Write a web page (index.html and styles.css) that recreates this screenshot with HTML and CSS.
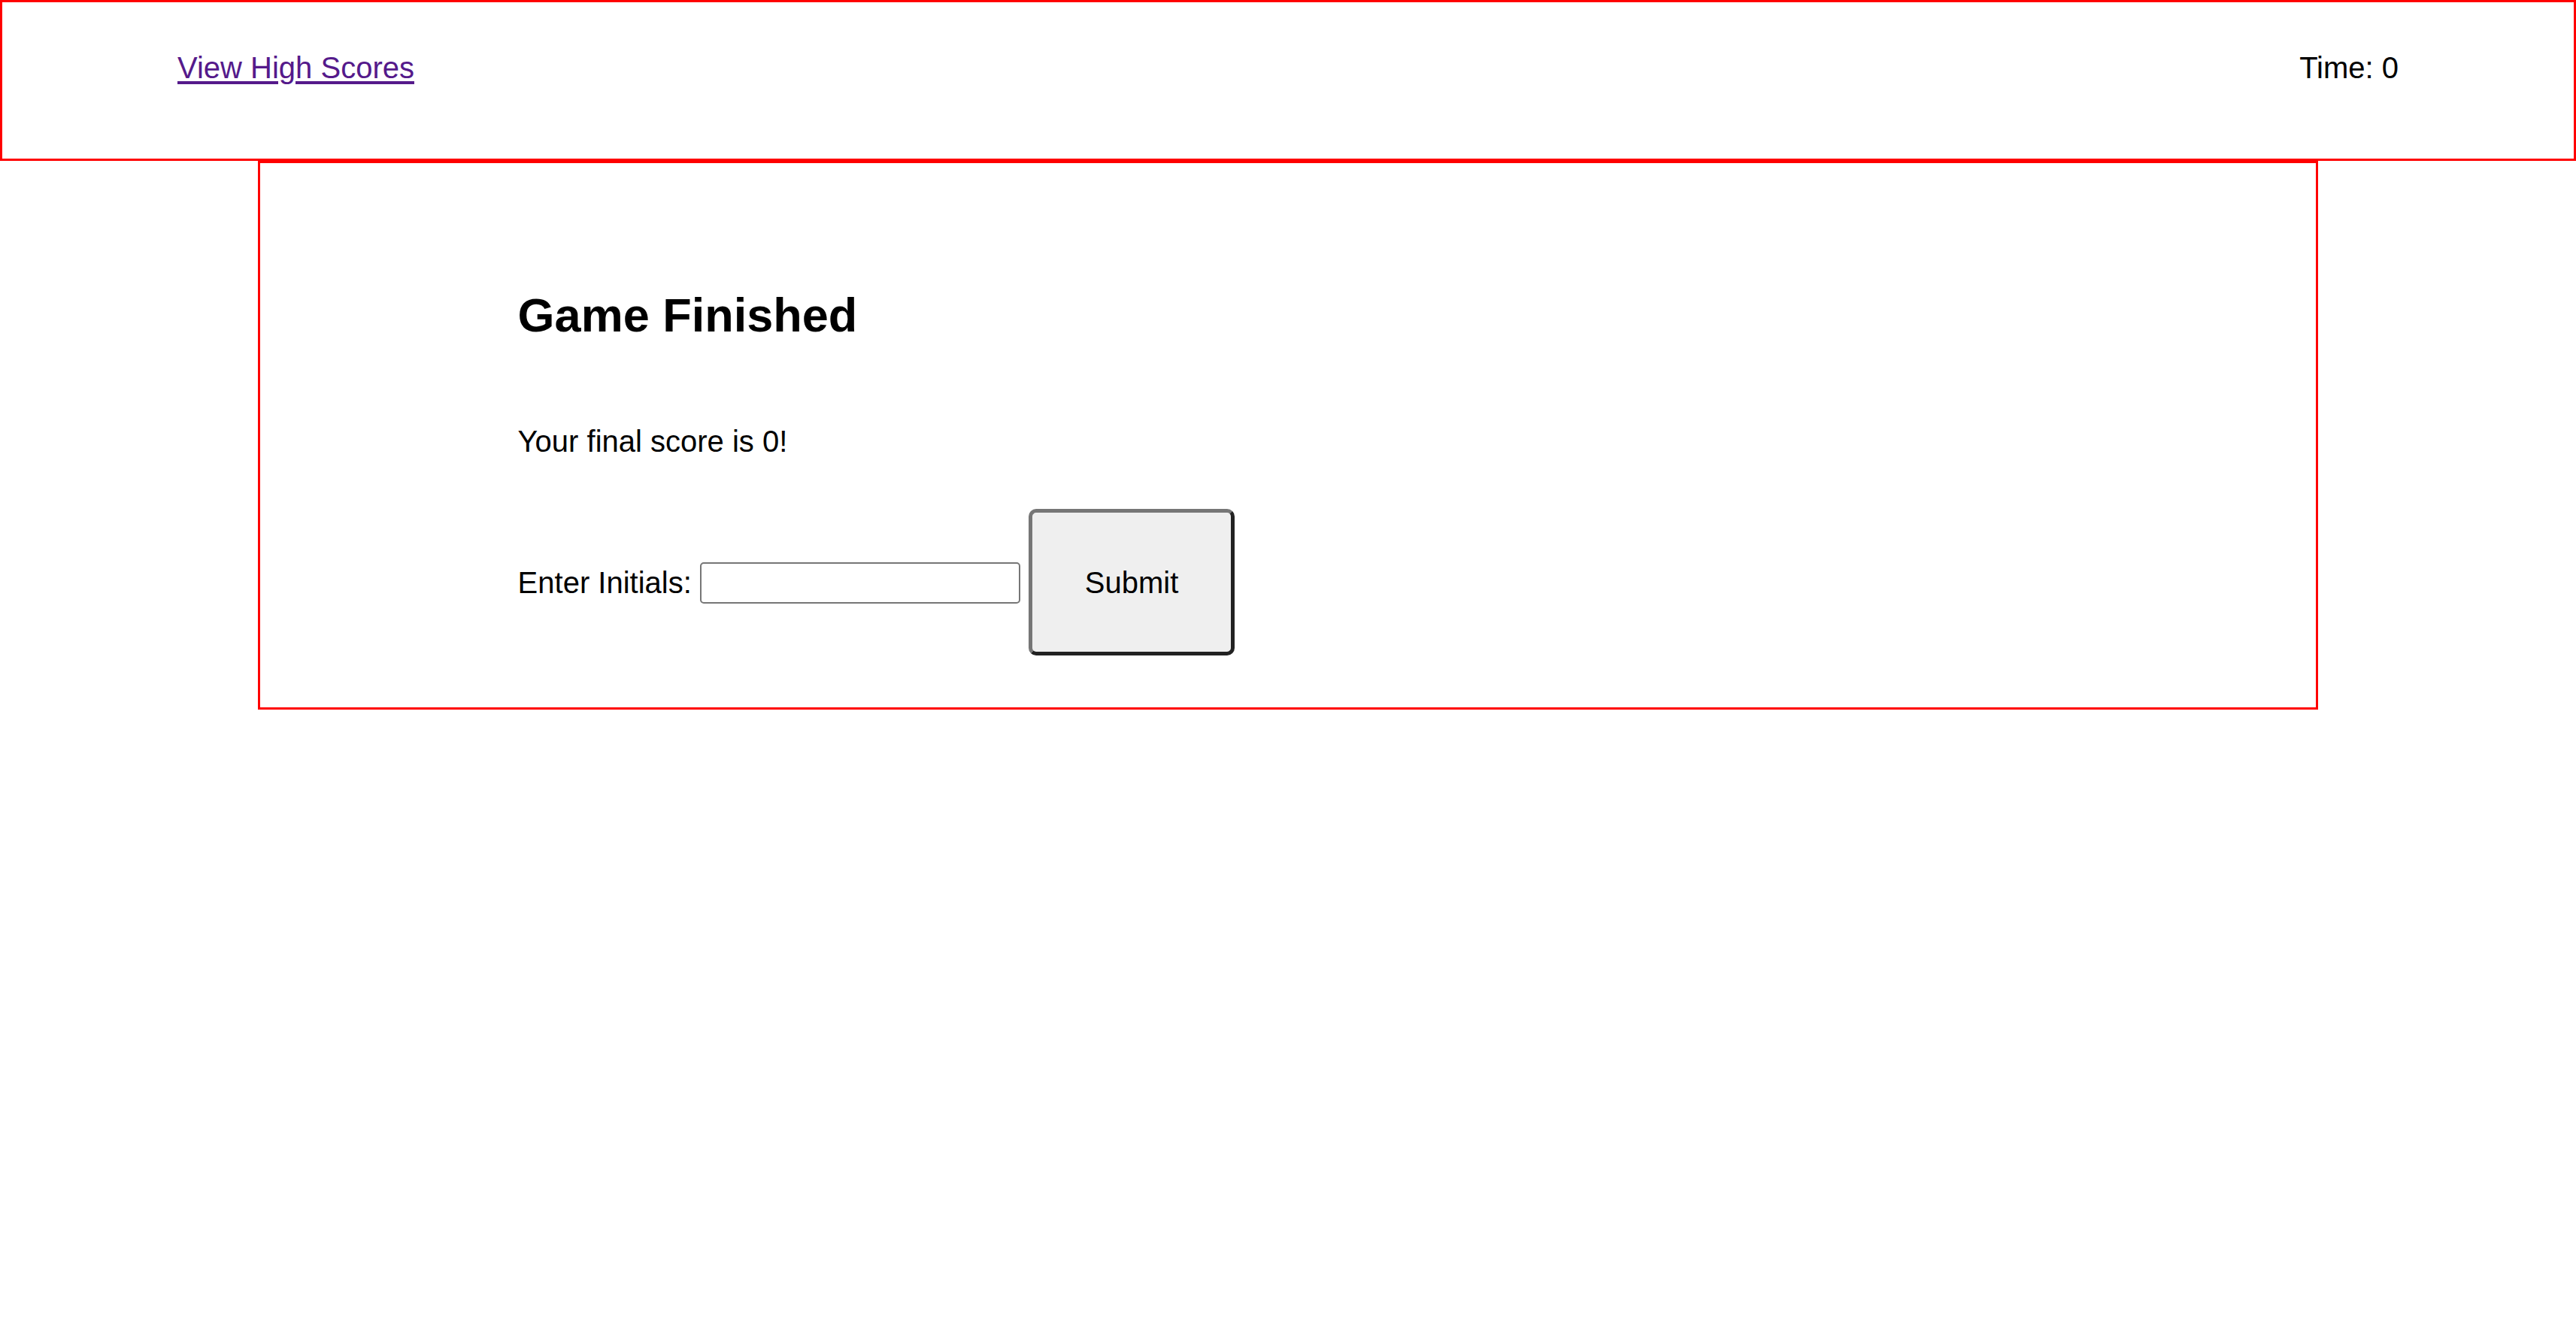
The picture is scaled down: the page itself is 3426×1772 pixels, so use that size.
FILE: index.html
```html
<!DOCTYPE html>
<html lang="en">
<head>
<meta charset="utf-8">
<title>Code Quiz</title>
<link rel="stylesheet" href="styles.css">
</head>
<body>
<header class="top-bar">
  <a class="scores-link" href="#">View High Scores</a>
  <div class="timer">Time: 0</div>
</header>
<main class="quiz-panel">
  <section class="end-screen">
    <h2 class="end-title">Game Finished</h2>
    <p class="final-score">Your final score is 0!</p>
    <div class="initials-row"><label for="initials">Enter Initials:</label> <input id="initials" type="text" class="initials-input"> <button class="submit-btn" type="button">Submit</button></div>
  </section>
</main>
</body>
</html>
```

FILE: styles.css
```css
html, body {
  margin: 0;
  padding: 0;
  background: #ffffff;
}

body {
  font-family: "Liberation Sans", Arial, Helvetica, sans-serif;
  font-size: 40px;
  line-height: 46px;
  color: #000000;
}

.top-bar {
  box-sizing: border-box;
  width: 100%;
  height: 214px;
  border: 3px solid #ff0000;
  padding: 64px 233px 0 233px;
  display: flex;
  justify-content: space-between;
  align-items: flex-start;
}

.scores-link {
  color: #551a8b;
  text-decoration: underline;
  text-decoration-thickness: 4px;
  text-underline-offset: 4px;
}

.timer {
  color: #000000;
}

.quiz-panel {
  box-sizing: border-box;
  width: 80%;
  margin: 0 auto;
  border: 3px solid #ff0000;
  padding: 166px 0 69px 343px;
}

.end-screen {
  display: flex;
  flex-direction: column;
  align-items: flex-start;
}

.end-title {
  margin: 0;
  font-size: 63px;
  line-height: 72px;
  font-weight: bold;
}

.final-score {
  margin: 109px 0 0 0;
}

.initials-row {
  margin-top: 67px;
  white-space: nowrap;
}

.initials-input {
  box-sizing: border-box;
  width: 426px;
  height: 55px;
  border: 2px solid #767676;
  border-radius: 5px;
  padding: 0 4px;
  font-family: inherit;
  font-size: 40px;
  background: #ffffff;
  vertical-align: baseline;
}

.submit-btn {
  box-sizing: border-box;
  width: 274px;
  height: 195px;
  padding: 0;
  border-width: 5px;
  border-style: solid;
  border-color: #767676 #222222 #222222 #767676;
  border-radius: 10px;
  background: #efefef;
  color: #000000;
  font-family: inherit;
  font-size: 40px;
  line-height: 46px;
  vertical-align: baseline;
}
```
